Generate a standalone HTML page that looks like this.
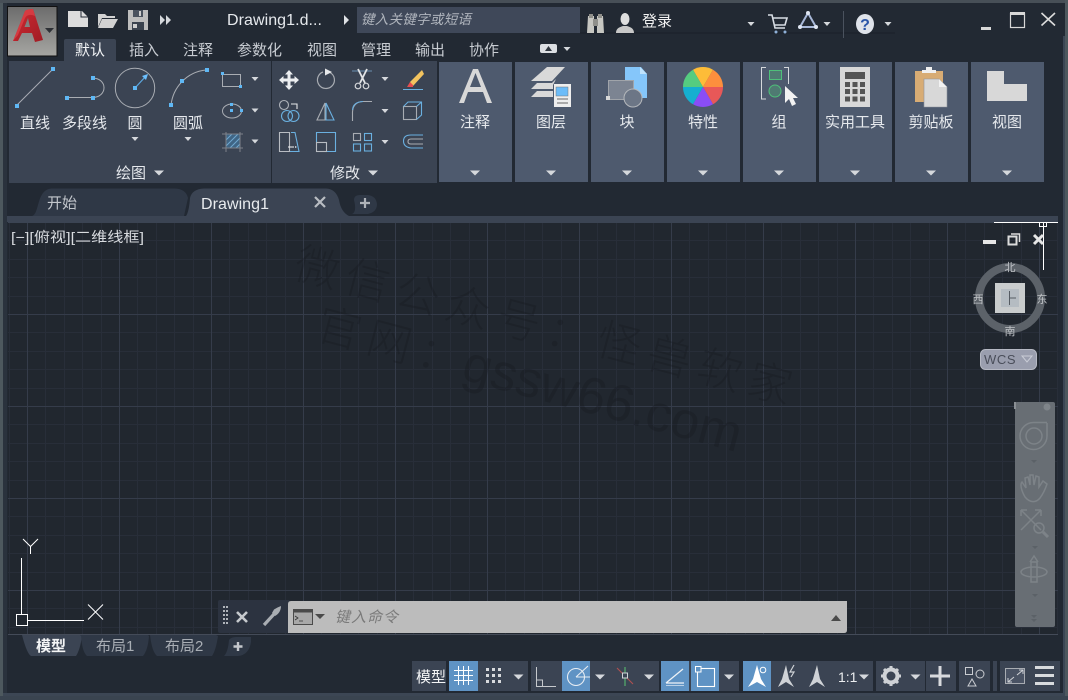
<!DOCTYPE html>
<html><head><meta charset="utf-8"><style>
html,body{margin:0;padding:0;background:#222933;width:1068px;height:700px;overflow:hidden}
svg{display:block}
text{font-family:"Liberation Sans","Noto Sans CJK SC",sans-serif;fill:#e6e9ed;font-size:15px}
.m{text-anchor:middle}
</style></head><body>
<svg width="1068" height="700" viewBox="0 0 1068 700" xmlns="http://www.w3.org/2000/svg">
<defs>
<polygon id="t" points="-3.500,-2 3.500,-2 0,2" fill="#d5d8dc"/>
<polygon id="T" points="-5,-2.500 5,-2.500 0,2.500" fill="#d5d8dc"/>
<pattern id="g" x="27" y="38" width="92" height="92" patternUnits="userSpaceOnUse">
<rect width="92" height="92" fill="#21272f"/>
<path d="M18 0h1v92h-1zM37 0h1v92h-1zM55 0h1v92h-1zM74 0h1v92h-1zM0 18h92v1H0zM0 37h92v1H0zM0 55h92v1H0zM0 74h92v1H0z" fill="#282e39"/>
<path d="M0 0h1v92H0zM0 0h92v1H0z" fill="#353c4a"/>
</pattern>
<linearGradient id="ab" x1="0" y1="0" x2="0" y2="1"><stop offset="0" stop-color="#6c6c6c"/><stop offset="1" stop-color="#a6a6a2"/></linearGradient>
<linearGradient id="ar" x1="0" y1="0" x2="1" y2="1"><stop offset="0" stop-color="#cf2a32"/><stop offset="1" stop-color="#a01c24"/></linearGradient>
</defs>

<!-- frame -->
<rect width="1068" height="700" fill="#3c4654"/>
<rect width="3" height="700" fill="#4d585e"/>
<rect x="3" y="3" width="5" height="690" fill="#2a323d"/>
<rect y="0" width="1068" height="3" fill="#474f57"/>
<rect x="1065" width="3" height="700" fill="#4d585e"/>
<rect x="7" y="3" width="1056" height="690" fill="#222933"/>
<rect x="0" y="696" width="1068" height="4" fill="#3a4450"/>
<rect x="1054" y="3" width="11" height="33" fill="#222933"/>

<!-- app button -->
<rect x="7.500" y="6.500" width="49.500" height="49.500" fill="url(#ab)" stroke="#111" stroke-width="1"/>
<path d="M13 41L25 11Q27 9 33 9L43 40L35 42L32 33H22L18 41ZM24.500 27H30L28 18Z" fill="url(#ar)" fill-rule="evenodd"/>
<path d="M13 41L25 11Q27 9 33 9L35 16Q28 13 25 18L18 35Z" fill="#e0444a" opacity=".7"/>
<polygon points="45,28 54,28 49.500,33" fill="#2d3035"/>

<!-- QAT -->
<path d="M68 11H82L88 17V27H68Z" fill="#dcdcdc"/><path d="M81 11V17H88" fill="none" stroke="#222933"/>
<path d="M98 27V14H105L107 16H115V18H102L98 27ZM102 19H118L113 28H98Z" fill="#d2d2d2"/>
<path d="M128 10H148V30H128Z" fill="#bdbdbd"/><rect x="133" y="10" width="10" height="7" fill="#4a525e"/><rect x="139" y="11" width="2" height="5" fill="#cfcfcf"/><rect x="132" y="22" width="12" height="8" fill="#3a424e"/><rect x="133" y="24" width="4" height="4" fill="#cfcfcf"/>
<path d="M160 15L165 20L160 25ZM166 15L171 20L166 25Z" fill="#d5d8dc"/>
<text x="227" y="25" style="font-size:16px" textLength="95">Drawing1.d...</text>
<polygon points="344,15 349,20 344,25" fill="#dfe2e6"/>
<rect x="357" y="7" width="223" height="26" fill="#3f4859"/>
<text x="361" y="24" style="font-size:13.500px;font-style:italic;fill:#b0b5bd" textLength="110">键入关键字或短语</text>
<path d="M580 33H895" stroke="#1a2029"/>

<!-- right title icons -->
<path d="M588 16h6v17h-7zM597 16h6l1 17h-7z" fill="#c7c7c2"/><rect x="593" y="19" width="5" height="7" fill="#8f8f8a"/><rect x="589" y="14" width="4" height="4" fill="#8f8f8a"/><rect x="598" y="14" width="4" height="4" fill="#8f8f8a"/>
<ellipse cx="625" cy="19" rx="4.500" ry="6" fill="#dedede"/><path d="M616 33c0-5 4-6 7-7h4c3 1 7 2 7 7z" fill="#c8c8c8"/>
<text x="642" y="26" style="fill:#f2f2f2">登录</text>
<use href="#t" x="751" y="24"/>
<path d="M768 15h4l3 13h10M773 18h14l-2 7H775" fill="none" stroke="#d8dde4" stroke-width="1.600"/><circle cx="776" cy="32" r="1.500" fill="#8fb0d8"/><circle cx="785" cy="32" r="1.500" fill="#8fb0d8"/>
<path d="M808 13L800 27H816Z" fill="none" stroke="#a8b8d8" stroke-width="2"/><circle cx="808" cy="13" r="2" fill="#dfe6f2"/><circle cx="800" cy="27" r="2" fill="#dfe6f2"/><circle cx="816" cy="27" r="2" fill="#dfe6f2"/>
<use href="#t" x="827" y="24"/>
<rect x="843" y="11" width="1" height="27" fill="#4a525e"/>
<ellipse cx="865" cy="24" rx="9" ry="10" fill="#dfe3ea"/><text x="865" y="30" class="m" style="fill:#2a55a8;font-size:16px;font-weight:bold">?</text>
<use href="#t" x="888" y="24"/>
<rect x="981" y="27" width="10" height="3" fill="#d8d8d8"/>
<rect x="1010.500" y="13.500" width="14" height="14" fill="none" stroke="#d8d8d8" stroke-width="1.200"/><rect x="1010" y="12" width="15" height="3" fill="#d8d8d8"/>
<path d="M1041.500 13L1055 25.500M1055 13L1041.500 25.500" stroke="#dcdcdc" stroke-width="1.600"/>

<!-- ribbon tabs -->
<path d="M64 61V41q0-2 2-2H114q2 0 2 2V61Z" fill="#3b4453"/>
<text x="75" y="55" style="fill:#f2f4f6">默认</text>
<text x="129" y="55" style="fill:#c8ccd2">插入</text>
<text x="183" y="55" style="fill:#c8ccd2">注释</text>
<text x="237" y="55" style="fill:#c8ccd2">参数化</text>
<text x="307" y="55" style="fill:#c8ccd2">视图</text>
<text x="361" y="55" style="fill:#c8ccd2">管理</text>
<text x="415" y="55" style="fill:#c8ccd2">输出</text>
<text x="469" y="55" style="fill:#c8ccd2">协作</text>
<rect x="540" y="44" width="17" height="9" rx="2" fill="#dcdfe3"/><polygon points="545,51 552,51 548.500,46" fill="#30363f"/>
<use href="#t" x="567" y="49"/>

<!-- ribbon panels -->
<rect x="9" y="61" width="262" height="122" fill="#3b4453"/>
<rect x="272" y="61" width="165" height="122" fill="#3b4453"/>
<g fill="#4e5a6e">
<rect x="439" y="62" width="73" height="120"/><rect x="515" y="62" width="73" height="120"/><rect x="591" y="62" width="73" height="120"/><rect x="667" y="62" width="73" height="120"/><rect x="743" y="62" width="73" height="120"/><rect x="819" y="62" width="73" height="120"/><rect x="895" y="62" width="73" height="120"/><rect x="971" y="62" width="73" height="120"/>
</g>

<!-- draw icons -->
<g fill="none" stroke="#a9adb3" stroke-width="1">
<path d="M17 105L53 69"/>
<path d="M67 97.500H92M92 78C108 78 108 97.500 92 97.500"/>
<circle cx="135" cy="88" r="19.700"/>
<path d="M171 105C173 88 186 72 206 70"/>
<rect x="222.500" y="74.500" width="18" height="12"/>
<ellipse cx="232" cy="111" rx="9.500" ry="7"/>
</g>
<path d="M135 88L146 76" stroke="#5ca8e0" stroke-width="1.200"/><polygon points="148,74 142,76 146,80" fill="#6cc0ff"/>
<g fill="#5fb8f5">
<rect x="15" y="104" width="4" height="4"/><rect x="51" y="67" width="4" height="4"/>
<rect x="65" y="96" width="4" height="4"/><rect x="91" y="96" width="4" height="4"/><rect x="91" y="76" width="4" height="4"/>
<rect x="133" y="86" width="4" height="4"/>
<rect x="169" y="103" width="4" height="4"/><rect x="180" y="79" width="4" height="4"/><rect x="205" y="68" width="4" height="4"/>
<rect x="221" y="72" width="3" height="3"/><rect x="239" y="85" width="3" height="3"/>
<rect x="230" y="109" width="3" height="3"/><rect x="230" y="103" width="3" height="3"/><rect x="240" y="109" width="3" height="3"/>
</g>
<rect x="226" y="134" width="14" height="14" fill="#3f6585"/>
<path d="M226 140l6-6M226 146l12-12M230 148l10-10M236 148l4-4" stroke="#70a8d0" stroke-width="1"/>
<path d="M222 134H243M222 148H243M226 132V152M240 132V152" stroke="#7c8189" stroke-width="1" fill="none"/>
<use href="#t" x="255" y="79"/><use href="#t" x="255" y="110.500"/><use href="#t" x="255" y="141.500"/>
<use href="#t" x="135" y="139"/><use href="#t" x="188" y="139"/>
<text x="35" y="128" class="m">直线</text><text x="84.500" y="128" class="m">多段线</text><text x="135" y="128" class="m">圆</text><text x="188" y="128" class="m">圆弧</text>
<text x="131" y="178" class="m">绘图</text><text x="345" y="178" class="m">修改</text>
<use href="#T" x="159" y="173"/><use href="#T" x="373" y="173"/>

<!-- modify icons -->
<path d="M289 70l4 4.500h-2.500v4h4V76l4.500 4-4.500 4v-2.500h-4v4h2.500l-4 4.500-4-4.500h2.500v-4h-4V84l-4.500-4 4.500-4v2.500h4v-4H285Z" fill="#eceef0"/>
<path d="M330 72.500A8.500 8.500 0 1 1 323 72" fill="none" stroke="#a8acb2" stroke-width="1.200"/><polygon points="325,68.500 332,72 325,75.500" fill="#e6e8ea"/>
<path d="M352 71H372" stroke="#5f7f9d" stroke-width="1.200"/>
<path d="M358 69L365 83M367 69L360 83" stroke="#e2e4e6" stroke-width="1.800"/><circle cx="358" cy="86" r="2.800" fill="none" stroke="#d5d7da" stroke-width="1.200"/><circle cx="366" cy="86" r="2.800" fill="none" stroke="#d5d7da" stroke-width="1.200"/>
<use href="#t" x="385" y="79"/>
<path d="M422 70L410 82L413 86L424 74Z" fill="#f2c35f"/><path d="M410 82L407 87L413 87L413 85Z" fill="#e54e50"/><path d="M403 89.500H423" stroke="#6ab0e0" stroke-width="1"/>
<g fill="none" stroke-width="1.100">
<circle cx="284" cy="105" r="4.500" stroke="#aeb2b8"/>
<path d="M291 104H297V109" stroke="#e6e8ea"/>
<circle cx="287" cy="116" r="5.500" stroke="#6ab0e0"/><circle cx="293.500" cy="116" r="5.500" stroke="#6ab0e0"/>
<path d="M325 103L317 120H325Z" stroke="#a8acb2"/><path d="M326 103L334 120H326Z" stroke="#6ab0e0"/>
<path d="M352.500 121V112Q353 102 363 101.500H372" stroke="#a8acb2"/><path d="M352.500 110Q353 102 363 101.500" stroke="#6ab0e0"/>
<rect x="403.500" y="106.500" width="13" height="13" stroke="#a8acb2"/><path d="M403.500 106.500L408 102H421.500V115L416.500 119.500M416.500 106.500L421.500 102" stroke="#6ab0e0"/>
<path d="M279.500 132.500H289.500V151.500H279.500Z" stroke="#b8bcc2"/><path d="M291 132.500H295L299 151.500H290" stroke="#6ab0e0"/><path d="M288 147H294" stroke="#e6e8ea"/>
<path d="M316.500 142V132.500H335.500V151.500H326" stroke="#6ab0e0"/><rect x="316.500" y="142.500" width="10" height="9" stroke="#b8bcc2"/>
<rect x="353.500" y="133.500" width="7" height="7" stroke="#a8acb2"/><rect x="364.500" y="133.500" width="7" height="7" stroke="#6ab0e0"/><rect x="353.500" y="144" width="7" height="7" stroke="#6ab0e0"/><rect x="364.500" y="144" width="7" height="7" stroke="#6ab0e0"/>
<path d="M423 135H411Q403.500 135 403.500 141T411 148H423" stroke="#6ab0e0"/><path d="M423 139H411Q408 139 408 141.500T411 144H423" stroke="#a8acb2"/>
</g>
<polygon points="295,146 295,148 297,147" fill="#e6e8ea"/>
<use href="#t" x="385" y="111"/><use href="#t" x="385" y="142"/>

<!-- right panels icons -->
<path d="M459 103L473 69H478L492 103H487L483 92H468L464 103ZM470 87H481L475.500 73Z" fill="#d8d8d8" fill-rule="evenodd"/>
<g fill="#d9d9d9">
<path d="M547 67H565L552 81H531Z"/><path d="M537 83L531 89H553V85L556 79L552 83Z"/><path d="M537 91L531 97H553V91Z"/>
</g>
<rect x="554" y="84" width="17" height="23" fill="#eeeeee"/><rect x="556" y="87" width="12" height="9" fill="#6cbcf8" stroke="#777" stroke-width=".5"/>
<path d="M557 99H568M557 103H568" stroke="#666" stroke-width="1"/>
<path d="M625 67H641L647 74V98H625Z" fill="#85c6fa"/><path d="M640 67V74H647" fill="#bfe2fc"/>
<rect x="608.500" y="80.500" width="25" height="19" fill="#7c8492" stroke="#a0a4aa"/>
<circle cx="633" cy="98" r="9" fill="#6c7686" stroke="#b5b8bc" stroke-width="1"/><rect x="606" y="96" width="4" height="4" fill="#d8d8d8"/>
<path d="M703 87L693 69.700A20 20 0 0 1 713 69.700Z" fill="#fdbc38"/>
<path d="M703 87L713 69.700A20 20 0 0 1 723 87Z" fill="#fd8f3d"/>
<path d="M703 87H723A20 20 0 0 1 713 104.300Z" fill="#e85858"/>
<path d="M703 87L713 104.300A20 20 0 0 1 693 104.300Z" fill="#8a4df5"/>
<path d="M703 87L693 104.300A20 20 0 0 1 683 87Z" fill="#15afd0"/>
<path d="M703 87H683A20 20 0 0 1 693 69.700Z" fill="#55cc80"/>
<path d="M766 67.500H761.500V99H766M784 67.500H788.500V84" fill="none" stroke="#d5d8dc" stroke-width="1"/>
<rect x="769.500" y="70.500" width="12" height="9" fill="#4f7a72" stroke="#4fc07a"/><circle cx="775" cy="91" r="6" fill="#4f7a72" stroke="#4fc07a"/>
<path d="M785 86V103L789 99L792 106L796 104L793 98H798Z" fill="#f2f2f2"/>
<rect x="840" y="67" width="30" height="40" fill="#d8d8d8"/><rect x="845" y="72" width="20" height="7" fill="#555"/>
<g fill="#555"><rect x="845" y="82" width="5" height="5"/><rect x="852.500" y="82" width="5" height="5"/><rect x="860" y="82" width="5" height="5"/><rect x="845" y="89" width="5" height="5"/><rect x="852.500" y="89" width="5" height="5"/><rect x="860" y="89" width="5" height="5"/><rect x="845" y="96.500" width="5" height="5"/><rect x="852.500" y="96.500" width="5" height="5"/><rect x="860" y="96.500" width="5" height="5"/></g>
<rect x="915" y="71" width="28" height="31" fill="#d8ac74"/><path d="M922 73V70H926V67H932V70H936V73Z" fill="#f0f0f0"/>
<path d="M924 79H939L947 87V107H924Z" fill="#d8d8d8" stroke="#8e939b" stroke-width=".6"/><path d="M939 79V87H947" fill="#f2f2f2"/>
<path d="M987 71H1004V84H1027V101H987Z" fill="#d8d8d8"/>
<text x="475" y="127" class="m">注释</text><text x="551" y="127" class="m">图层</text><text x="627" y="127" class="m">块</text><text x="703" y="127" class="m">特性</text><text x="779" y="127" class="m">组</text><text x="855" y="127" class="m">实用工具</text><text x="931" y="127" class="m">剪贴板</text><text x="1007" y="127" class="m">视图</text>
<use href="#T" x="475" y="173"/><use href="#T" x="551" y="173"/><use href="#T" x="627" y="173"/><use href="#T" x="703" y="173"/><use href="#T" x="779" y="173"/><use href="#T" x="855" y="173"/><use href="#T" x="931" y="173"/><use href="#T" x="1007" y="173"/>

<!-- doc tabs -->
<path d="M32 216C40 214 36 189 52 188.500H175Q186 189 188 198L184 216Z" fill="#2f3846"/>
<path d="M186 216Q189 212 190 198Q192 189 204 188.500H326Q336 189 339 200Q341 212 349 216Z" fill="#3b4453"/>
<path d="M352 214Q357 212 354 200Q354 195 360 195H368Q376 196 377 204Q377 212 368 214Z" fill="#2f3846"/>
<rect x="7" y="216" width="1051" height="6" fill="#3b4453"/>
<text x="47" y="208" style="fill:#c2c6cc;font-size:15px">开始</text>
<text x="201" y="209" style="fill:#e8ebee;font-size:16px" textLength="68">Drawing1</text>
<path d="M315 197L325 207M325 197L315 207" stroke="#b9bdc3" stroke-width="2.200"/>
<path d="M365 198V208M360 203H370" stroke="#aeb2b8" stroke-width="2.200"/>

<!-- viewport -->
<rect x="8" y="222" width="1050" height="412" fill="url(#g)"/>
<rect x="8" y="222" width="1050" height="1" fill="#3b4453"/>

<!-- watermark -->
<g opacity=".3">
<text transform="translate(292,277) rotate(14.800)" style="font-family:'Noto Sans CJK SC',sans-serif;font-weight:300;font-size:44px;fill:#14171d;letter-spacing:8px">微信公众号：</text>
<text transform="translate(594,353) rotate(14.800)" style="font-family:'Noto Sans CJK SC',sans-serif;font-weight:300;font-size:44px;fill:#14171d;letter-spacing:8px">怪兽软家</text>
<text transform="translate(314,338) rotate(14.800)" style="font-family:'Noto Sans CJK SC',sans-serif;font-weight:300;font-size:44px;fill:#14171d;letter-spacing:8px">官网：</text>
<text transform="translate(460,379) rotate(14.800)" style="font-size:51.500px;fill:#14171d">gssw66.com</text>
</g>

<text x="11" y="242" style="font-size:14px;fill:#d8dbdf" textLength="133" lengthAdjust="spacingAndGlyphs">[−][俯视][二维线框]</text>

<!-- crosshair -->
<path d="M994 222.500H1058M1043.500 222V270" stroke="#fff" stroke-width="1"/><rect x="1039.500" y="222.500" width="7" height="4" fill="none" stroke="#fff"/>

<!-- viewport controls -->
<rect x="983" y="240" width="13" height="4" fill="#e6e6e6"/>
<rect x="1008.500" y="236.500" width="8" height="8" fill="none" stroke="#dcdcdc" stroke-width="2"/><path d="M1011 234H1019.500V242" fill="none" stroke="#dcdcdc" stroke-width="1.500"/>
<path d="M1034 235L1043 244M1043 235L1034 244" stroke="#e6e6e6" stroke-width="3"/>

<!-- viewcube -->
<circle cx="1010" cy="298" r="31" fill="none" stroke="#5c6269" stroke-width="8"/>
<rect x="995" y="283" width="30" height="30" fill="#c9cccd"/><rect x="1001" y="289" width="18" height="18" fill="#b5bcc2"/>
<path d="M1009.500 291V305M1010 298H1016" stroke="#555b62" stroke-width="1"/>
<text x="1010" y="271" class="m" style="font-size:11px;fill:#bfc2c6">北</text>
<text x="1010" y="335" class="m" style="font-size:11px;fill:#bfc2c6">南</text>
<text x="978" y="303" class="m" style="font-size:11px;fill:#bfc2c6">西</text>
<text x="1042" y="303" class="m" style="font-size:11px;fill:#bfc2c6">东</text>
<rect x="980.500" y="349.500" width="56" height="20" rx="5" fill="#9a9eae" stroke="#b6b9c4"/>
<text x="984" y="364" style="font-size:13px;fill:#4a4e5a;letter-spacing:.6px">WCS</text>
<path d="M1022 356H1032L1027 362Z" fill="none" stroke="#c9ccd6"/>

<!-- nav bar -->
<rect x="1015" y="402" width="40" height="225" rx="2" fill="#686e74"/>
<rect x="1014" y="402" width="2" height="7" fill="#8a8f94"/>
<circle cx="1047" cy="407" r="3.500" fill="#7f858a"/>
<g fill="none" stroke="#7d8388" stroke-width="1.500">
<path d="M1047 423V436A13.500 13.500 0 1 1 1034 422.500H1047"/><circle cx="1034" cy="436" r="8"/>
<path d="M1025 497C1021 490 1020 484 1022 482L1026 488L1025 478L1028 477L1030 485V475L1033 475L1034 485L1036 476L1039 477L1039 487L1043 481L1047 484C1045 490 1043 494 1040 498C1036 503 1030 503 1025 497Z"/>
<path d="M1021 510L1041 530M1041 510L1021 530M1021 510V516M1021 510H1027M1041 510V516M1041 510H1035"/>
<circle cx="1039" cy="528" r="5"/>
<path d="M1043 532L1048 537" stroke-width="3"/>
<path d="M1030 562L1034 556L1038 562"/><rect x="1031" y="562" width="6" height="20"/>
<ellipse cx="1034" cy="572" rx="13" ry="5"/>
</g>
<g fill="#5b6167"><polygon points="1031,460 1037,460 1034,463"/><polygon points="1032,546 1038,546 1035,549"/><polygon points="1032,594 1038,594 1035,597"/><path d="M1031 615h6l-3 3zM1031 619h6l-3 3z"/></g>

<!-- UCS -->
<g stroke="#fff" stroke-width="1" fill="none">
<rect x="16.500" y="614.500" width="11" height="11"/>
<path d="M21.500 558V614M27 620.500H84"/>
<path d="M23 539L30.500 546.500L38 539M30.500 546.500V554"/>
<path d="M88 604.500L103 619.500M103 604.500L88 619.500"/>
</g>

<!-- command line -->
<rect x="218" y="600" width="72" height="33" rx="2" fill="#2c3340"/>
<g fill="#b0b4ba"><rect x="223" y="606" width="2" height="2"/><rect x="226" y="606" width="2" height="2"/><rect x="223" y="610" width="2" height="2"/><rect x="226" y="610" width="2" height="2"/><rect x="223" y="614" width="2" height="2"/><rect x="226" y="614" width="2" height="2"/><rect x="223" y="618" width="2" height="2"/><rect x="226" y="618" width="2" height="2"/><rect x="223" y="622" width="2" height="2"/><rect x="226" y="622" width="2" height="2"/></g>
<path d="M237 612L247 622M247 612L237 622" stroke="#c6c9cd" stroke-width="2.600"/>
<path d="M264 625L275 613" stroke="#a9adb2" stroke-width="3.200"/><path d="M274 609.500L277.500 607.500L281 606C281 610 279 614 275 616L272 613Z" fill="#a9adb2"/>
<path d="M288 604q0-3 3-3H847V630q0 3-3 3H288Z" fill="#bcbcbc"/>
<rect x="293.500" y="609.500" width="19" height="15" fill="#a8a8a8" stroke="#4a4a4a"/><rect x="293.500" y="609.500" width="19" height="3" fill="#4a4a4a"/>
<path d="M295 616L298 618L295 620M299 621H303" fill="none" stroke="#333" stroke-width=".8"/>
<polygon points="315,614 325,614 320,619" fill="#4a4a4a"/>
<text x="335" y="622" style="font-size:15px;font-style:italic;fill:#7a7a7a" textLength="63">键入命令</text>
<polygon points="831,621 841,621 836,615" fill="#4a4a4a"/>

<!-- layout tabs -->
<rect x="8" y="634" width="1050" height="1" fill="#444b58"/>
<path d="M22 635Q27 654 31 656H76Q80 650 82 636L80 635Z" fill="#3b4453"/>
<path d="M81 635Q82 652 87 656H143Q148 650 149 636L148 635Z" fill="#2f3846"/>
<path d="M150 635Q152 652 157 656H212Q216 650 218 636L216 635Z" fill="#2f3846"/>
<path d="M224 656Q228 652 229 640Q231 637 236 637H251V642Q249 655 238 656Z" fill="#2f3846"/>
<text x="36" y="651" style="font-size:15px;font-weight:bold;fill:#f4f5f6">模型</text>
<text x="96" y="651" style="font-size:15px;fill:#a9aeb5">布局1</text>
<text x="165" y="651" style="font-size:15px;fill:#a9aeb5">布局2</text>
<path d="M238 642V651M233.500 646.500H242.500" stroke="#c4c7cc" stroke-width="2.400"/>

<!-- status bar groups -->
<g fill="#3b4453">
<rect x="412" y="661" width="34" height="30"/><rect x="449" y="661" width="79" height="30"/><rect x="531" y="661" width="128" height="30"/><rect x="661" y="661" width="78" height="30"/><rect x="743" y="661" width="130" height="30"/><rect x="876" y="661" width="49" height="30"/><rect x="926" y="661" width="30" height="30"/><rect x="959" y="661" width="31" height="30"/><rect x="993" y="661" width="4" height="30"/><rect x="1000" y="661" width="60" height="30"/>
</g>
<g fill="#5f93c4"><rect x="449" y="661" width="29" height="30"/><rect x="562" y="661" width="28" height="30"/><rect x="661" y="661" width="28" height="30"/><rect x="691" y="661" width="28" height="30"/><rect x="743" y="661" width="28" height="30"/></g>
<text x="416" y="682" style="font-size:15px;fill:#f4f5f6" textLength="30">模型</text>
<path d="M458.500 666V685M463.500 666V685M468.500 666V685M454 670.500H473M454 675.500H473M454 680.500H473" stroke="#fff" stroke-width="1"/>
<g fill="#d8dadd"><rect x="486" y="668" width="3" height="3"/><rect x="492" y="668" width="3" height="3"/><rect x="498" y="668" width="3" height="3"/><rect x="486" y="674" width="3" height="3"/><rect x="492" y="674" width="3" height="3"/><rect x="498" y="674" width="3" height="3"/><rect x="486" y="680" width="3" height="3"/><rect x="492" y="680" width="3" height="3"/><rect x="498" y="680" width="3" height="3"/></g>
<use href="#T" x="518.500" y="677"/>
<path d="M536.500 667V686.500H556M536.500 680H542.500V686" fill="none" stroke="#c6c9cd" stroke-width="1"/>
<circle cx="576" cy="677" r="8.500" fill="none" stroke="#e6ecf2" stroke-width="1.100"/><path d="M576 677L588 666M576 677H590" stroke="#e6ecf2" stroke-width="1.100"/>
<use href="#T" x="600" y="677"/>
<path d="M617 668L633 684" stroke="#b05050" stroke-width="1.100"/><path d="M625 667V686" stroke="#58b870" stroke-width="1.100"/><rect x="622.500" y="673" width="5" height="5" fill="#3b4453" stroke="#d0d3d7"/>
<use href="#T" x="649" y="677"/>
<path d="M666 683L683 669M666 683H684" stroke="#eef2f6" stroke-width="1.300" fill="none"/><path d="M666 685.500H684" stroke="#b8cfe5" stroke-width="1"/>
<rect x="697.500" y="668.500" width="17" height="18" fill="none" stroke="#fff" stroke-width="1.100"/><rect x="695.500" y="666.500" width="5.500" height="5.500" fill="#5f93c4" stroke="#fff"/>
<use href="#T" x="729" y="677"/>
<path d="M757 665L761 679L766 687L757 682L748 687L753 679Z" fill="#fff"/><circle cx="763" cy="670" r="2.800" fill="none" stroke="#fff"/>
<path d="M786 665L789 679L794 687L786 682L778 687L782 679Z" fill="#cfd2d6"/><path d="M794 665L790 672H794L791 677" fill="none" stroke="#cfd2d6" stroke-width="1.200"/>
<path d="M817 665L820 679L825 687L817 682L809 687L813 679Z" fill="#cfd2d6"/>
<text x="838" y="682" style="font-size:14px;fill:#eceef0">1:1</text>
<use href="#T" x="864" y="677"/>
<circle cx="891" cy="676" r="6.500" fill="none" stroke="#cfd2d6" stroke-width="4"/>
<path d="M891 666V686M881 676H901M884 669L898 683M898 669L884 683" stroke="#cfd2d6" stroke-width="3" stroke-dasharray="3 14"/>
<use href="#T" x="915.500" y="677"/>
<path d="M940 666V686M930 676H950" stroke="#d8dadd" stroke-width="3"/>
<rect x="965.500" y="667.500" width="7" height="7" fill="none" stroke="#c9ccd1"/><circle cx="980" cy="674" r="4" fill="none" stroke="#c9ccd1"/><path d="M972 679L976 686H968Z" fill="none" stroke="#c9ccd1"/>
<rect x="1005.500" y="668.500" width="19" height="15" fill="#4a5364" stroke="#a8acb2"/><path d="M1014 677L1008 682M1008 678V682H1012M1017 675L1023 670M1019 670H1023V674" stroke="#d0d3d7" fill="none"/>
<rect x="1035" y="666" width="19" height="3" fill="#d8dadd"/><rect x="1035" y="674" width="19" height="3" fill="#d8dadd"/><rect x="1035" y="682" width="19" height="3" fill="#d8dadd"/>
</svg>
</body></html>
